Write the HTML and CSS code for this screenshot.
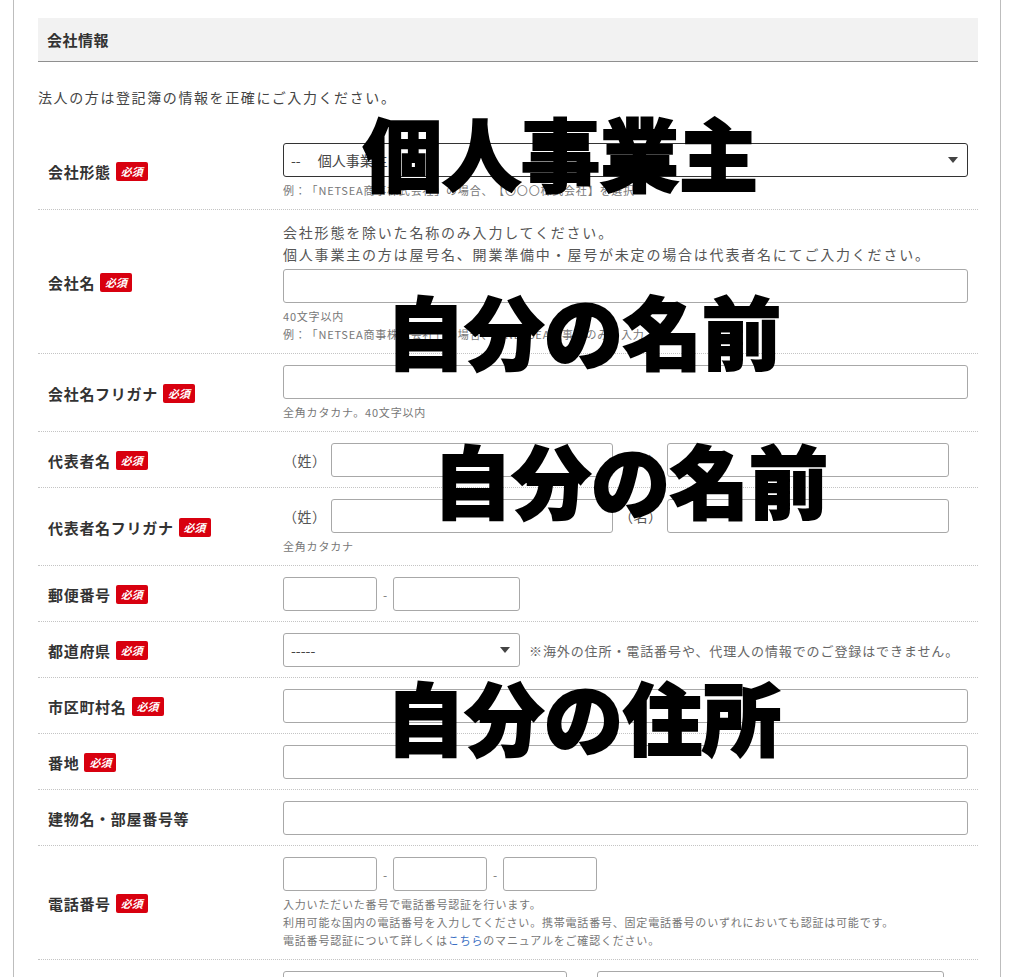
FILE: index.html
```html
<!DOCTYPE html>
<html lang="ja">
<head>
<meta charset="utf-8">
<title>会社情報</title>
<link rel="stylesheet" href="styles.css">
</head>
<body>
<div class="page">
  <div class="panel">
    <h2 class="sec-title">会社情報</h2>
    <p class="intro">法人の方は登記簿の情報を正確にご入力ください。</p>

    <div class="form">
      <div class="row">
        <div class="label">会社形態<span class="req">必須</span></div>
        <div class="field">
          <div class="select select-full select-dark"><span>--　 個人事業主　--</span><svg class="arrow" width="10" height="6" viewBox="0 0 10 6"><polygon points="0,0 10,0 5,6"/></svg></div>
          <p class="hint">例：「NETSEA商事株式会社」の場合、【〇〇〇株式会社】を選択</p>
        </div>
      </div>

      <div class="row">
        <div class="label">会社名<span class="req">必須</span></div>
        <div class="field">
          <p class="note">会社形態を除いた名称のみ入力してください。</p>
          <p class="note">個人事業主の方は屋号名、開業準備中・屋号が未定の場合は代表者名にてご入力ください。</p>
          <input class="input input-full input-after-note" type="text">
          <p class="hint">40文字以内</p>
          <p class="hint hint-tight">例：「NETSEA商事株式会社」の場合、【NETSEA商事】のみを入力</p>
        </div>
      </div>

      <div class="row">
        <div class="label">会社名フリガナ<span class="req">必須</span></div>
        <div class="field">
          <input class="input input-full" type="text">
          <p class="hint">全角カタカナ。40文字以内</p>
        </div>
      </div>

      <div class="row">
        <div class="label">代表者名<span class="req">必須</span></div>
        <div class="field">
          <div class="name-line">
            <div class="name-group"><span class="name-tag">（姓）</span><input class="input input-name" type="text"></div>
            <div class="name-group"><span class="name-tag">（名）</span><input class="input input-name" type="text"></div>
          </div>
        </div>
      </div>

      <div class="row">
        <div class="label">代表者名フリガナ<span class="req">必須</span></div>
        <div class="field">
          <div class="name-line">
            <div class="name-group"><span class="name-tag">（姓）</span><input class="input input-name" type="text"></div>
            <div class="name-group"><span class="name-tag">（名）</span><input class="input input-name" type="text"></div>
          </div>
          <p class="hint">全角カタカナ</p>
        </div>
      </div>

      <div class="row">
        <div class="label">郵便番号<span class="req">必須</span></div>
        <div class="field">
          <div class="inline">
            <input class="input input-s" type="text"><span class="dash">-</span><input class="input input-zip2" type="text">
          </div>
        </div>
      </div>

      <div class="row">
        <div class="label">都道府県<span class="req">必須</span></div>
        <div class="field">
          <div class="inline">
            <div class="select select-pref"><span>-----</span><svg class="arrow" width="10" height="6" viewBox="0 0 10 6"><polygon points="0,0 10,0 5,6"/></svg></div>
            <span class="side-note">※海外の住所・電話番号や、代理人の情報でのご登録はできません。</span>
          </div>
        </div>
      </div>

      <div class="row">
        <div class="label">市区町村名<span class="req">必須</span></div>
        <div class="field"><input class="input input-full" type="text"></div>
      </div>

      <div class="row">
        <div class="label">番地<span class="req">必須</span></div>
        <div class="field"><input class="input input-full" type="text"></div>
      </div>

      <div class="row">
        <div class="label">建物名・部屋番号等</div>
        <div class="field"><input class="input input-full" type="text"></div>
      </div>

      <div class="row">
        <div class="label">電話番号<span class="req">必須</span></div>
        <div class="field">
          <div class="inline">
            <input class="input input-s" type="text"><span class="dash">-</span><input class="input input-s" type="text"><span class="dash">-</span><input class="input input-s" type="text">
          </div>
          <p class="hint">入力いただいた番号で電話番号認証を行います。</p>
          <p class="hint hint-tight">利用可能な国内の電話番号を入力してください。携帯電話番号、固定電話番号のいずれにおいても認証は可能です。</p>
          <p class="hint hint-tight">電話番号認証について詳しくは<a class="link" href="#">こちら</a>のマニュアルをご確認ください。</p>
        </div>
      </div>

      <div class="row">
        <div class="label"></div>
        <div class="field">
          <div class="inline inline-wide">
            <input class="input input-m1" type="text"><input class="input input-m2" type="text">
          </div>
        </div>
      </div>
    </div>
  </div>

  <div class="stamp stamp-1">個人事業主</div>
  <div class="stamp stamp-2">自分の名前</div>
  <div class="stamp stamp-3">自分の名前</div>
  <div class="stamp stamp-4">自分の住所</div>
</div>
</body>
</html>
```
FILE: styles.css
```css
* { box-sizing: border-box; }

html, body {
  margin: 0;
  padding: 0;
  background: #fff;
}

body {
  font-family: "Noto Sans CJK JP", "Noto Sans", sans-serif;
  color: #333;
  height: 977px;
  overflow: hidden;
  text-spacing-trim: space-all;
}

.page {
  position: relative;
  width: 1024px;
}

.panel {
  margin-left: 13px;
  width: 988px;
  border-left: 1px solid #bdbdbd;
  border-right: 1px solid #bdbdbd;
  padding: 18px 22px 40px 24px;
}

.sec-title {
  margin: 0;
  height: 44px;
  line-height: 43px;
  background: #f2f2f2;
  border-bottom: 1px solid #8f8f8f;
  padding-left: 9px;
  font-size: 15px;
  font-weight: 700;
  letter-spacing: 0.5px;
  color: #333;
}

.intro {
  margin: 24px 0 24px;
  font-size: 14px;
  line-height: 22px;
  letter-spacing: 1.6px;
  color: #444;
}

.row {
  display: grid;
  grid-template-columns: 245px 1fr;
  align-items: center;
  padding: 11px 10px 10px 0;
  border-bottom: 1px dotted #c4c4c4;
}

.label {
  display: flex;
  align-items: center;
  gap: 5px;
  padding-left: 10px;
  font-size: 15px;
  font-weight: 700;
  letter-spacing: 0.7px;
  color: #333;
}

.req {
  display: inline-block;
  height: 19px;
  line-height: 19px;
  padding: 0 5px;
  background: #d8000f;
  color: #fff;
  font-size: 11px;
  font-weight: 700;
  font-style: italic;
  letter-spacing: 0;
  border-radius: 2px;
}

.field {
  min-width: 0;
}

.note {
  margin: 0;
  font-size: 14px;
  line-height: 22px;
  letter-spacing: 1.8px;
  color: #555;
  white-space: nowrap;
}

.hint {
  margin: 4px 0 0;
  font-size: 11px;
  line-height: 18px;
  letter-spacing: 0.8px;
  color: #777;
  white-space: nowrap;
}

.hint-tight {
  margin-top: 0;
}

.link {
  color: #3a6fc4;
  text-decoration: none;
}

.input {
  display: block;
  height: 34px;
  margin: 0;
  border: 1px solid #a8a8a8;
  border-radius: 3px;
  background: #fff;
  font: inherit;
  padding: 0 8px;
}

.input-full {
  width: 100%;
}

.input-after-note {
  margin-top: 4px;
}

.select {
  display: flex;
  align-items: center;
  justify-content: space-between;
  height: 34px;
  border: 1px solid #a8a8a8;
  border-radius: 3px;
  padding: 0 9px 0 7px;
  font-size: 14px;
  color: #444;
  background: #fff;
}

.select-full {
  width: 100%;
}

.select-dark {
  border-color: #333;
}

.select-pref {
  width: 237px;
  flex: none;
}

.arrow {
  display: block;
  fill: #444;
}

.name-line {
  display: flex;
  gap: 6px;
}

.name-group {
  display: flex;
  align-items: center;
}

.name-tag {
  width: 48px;
  font-size: 14px;
  color: #555;
  letter-spacing: 0.5px;
}

.input-name {
  width: 282px;
}

.inline {
  display: flex;
  align-items: center;
}

.inline-wide {
  gap: 30px;
}

.dash {
  width: 16px;
  text-align: center;
  font-size: 12px;
  color: #777;
}

.input-s {
  width: 94px;
}

.input-zip2 {
  width: 127px;
}

.input-m1 {
  width: 284px;
}

.input-m2 {
  width: 347px;
}

.side-note {
  margin-left: 9px;
  font-size: 13px;
  letter-spacing: 0.9px;
  color: #666;
  white-space: nowrap;
}

.stamp {
  position: absolute;
  font-family: "Noto Sans CJK JP", sans-serif;
  font-weight: 900;
  font-size: 79px;
  line-height: 1;
  color: #000;
  white-space: nowrap;
  -webkit-text-stroke: 2px #000;
}

.stamp-1 { left: 363px; top: 112px; }
.stamp-2 { left: 386px; top: 290px; }
.stamp-3 { left: 433px; top: 439px; }
.stamp-4 { left: 386px; top: 676px; }
```
